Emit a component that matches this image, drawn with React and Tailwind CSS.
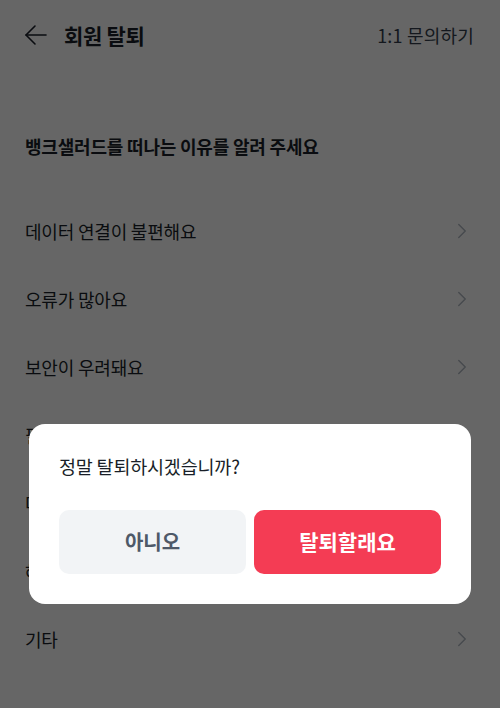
import { ChevronRight } from 'lucide-react';

const REASONS = [
  '데이터 연결이 불편해요',
  '오류가 많아요',
  '보안이 우려돼요',
  '필요한 기능이 없어요',
  '다른 서비스를 이용할래요',
  '혜택이 부족해요',
  '기타'
];

function BackArrow() {
  return (
    <svg width="24" height="24" viewBox="0 0 24 24" fill="none" stroke="#191f28" strokeWidth="1.6" strokeLinecap="round" strokeLinejoin="round">
      <path d="M22 12H2" />
      <path d="M11 3l-9 9 9 9" />
    </svg>
  );
}

export default function App() {
  return (
    <div
      className="relative h-[708px] w-[500px] overflow-hidden bg-white text-[#191f28]"
      style={{ fontFamily: '"Noto Sans CJK KR", "Noto Sans", sans-serif' }}
    >
      <header className="flex h-[70px] items-center justify-between pl-[24px] pr-[26px]">
        <div className="flex items-center gap-[16px]">
          <BackArrow />
          <h1 className="text-[21px] font-bold leading-[30px] tracking-[-0.3px]">회원 탈퇴</h1>
        </div>
        <button className="text-[18px] leading-[26px] tracking-[0.2px] text-[#333d4b]">1:1 문의하기</button>
      </header>

      <p className="mt-[62px] px-[25px] text-[18px] font-bold leading-[28px] tracking-[-0.2px]">
        뱅크샐러드를 떠나는 이유를 알려 주세요
      </p>

      <ul className="mt-[37px]">
        {REASONS.map((r) => (
          <li key={r} className="flex h-[68px] items-center justify-between pl-[25px] pr-[25px]">
            <span className="text-[18px] leading-[26px] tracking-[-0.2px] text-[#191f28]">{r}</span>
            <ChevronRight className="h-[26px] w-[26px] text-[#b0b8c1]" strokeWidth={1.3} />
          </li>
        ))}
      </ul>

      <div className="absolute inset-0 bg-black/60 pt-[424px]">
        <div className="mx-[29px] rounded-[16px] bg-white px-[30px] pb-[30px] pt-[30px]">
          <p className="text-[18.5px] leading-[24px] tracking-[-0.2px] text-[#191f28]">정말 탈퇴하시겠습니까?</p>
          <div className="mt-[32px] grid grid-cols-2 gap-[8px]">
            <button className="h-[64px] rounded-[10px] bg-[#f2f4f6] text-[20px] font-bold text-[#4e5968]">
              아니오
            </button>
            <button className="h-[64px] rounded-[10px] bg-[#f43c54] text-[21px] font-bold text-white">
              탈퇴할래요
            </button>
          </div>
        </div>
      </div>
    </div>
  );
}
